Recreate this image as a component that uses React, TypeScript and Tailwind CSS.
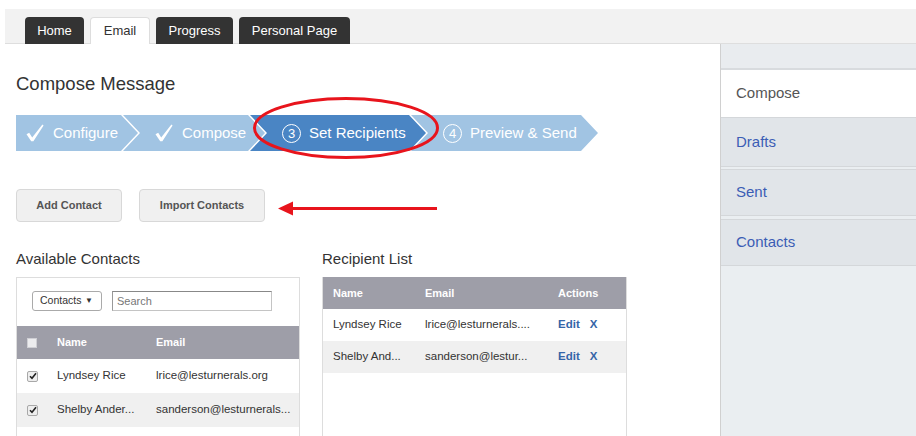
import type { ReactNode } from 'react';

type Contact = { id: number; name: string; email: string };

const available: Contact[] = [
  { id: 1, name: 'Lyndsey Rice', email: 'lrice@lesturnerals.org' },
  { id: 2, name: 'Shelby Ander...', email: 'sanderson@lesturnerals...' },
];

const recipients: Contact[] = [
  { id: 1, name: 'Lyndsey Rice', email: 'lrice@lesturnerals....' },
  { id: 2, name: 'Shelby And...', email: 'sanderson@lestur...' },
];

const CheckMark = () => (
  <svg width="18" height="18" viewBox="0 0 18 18" className="shrink-0">
    <path d="M0.5 10.2 L3.2 8.8 L6.2 13.4 L16.4 0.6 L17.6 1.4 L7.4 17.2 L5.2 17.2 Z" fill="#fff" />
  </svg>
);

const StepNumber = ({ n }: { n: number }) => (
  <span className="flex h-[19px] w-[19px] shrink-0 items-center justify-center rounded-full border-[1.5px] border-white text-[13px] leading-none">
    {n}
  </span>
);

const Box = ({ checked }: { checked?: boolean }) => (
  <span className="flex h-[11px] w-[11px] items-center justify-center rounded-[2px] border border-[#a8a8a8] bg-[#eeeeee]">
    {checked && (
      <svg width="8" height="8" viewBox="0 0 8 8">
        <path d="M1 4.2 L3 6.3 L7 1.3" fill="none" stroke="#222" strokeWidth="1.6" />
      </svg>
    )}
  </span>
);

const Tab = ({ label, active, width }: { label: string; active?: boolean; width: string }) => (
  <div
    className={
      active
        ? `-mb-px flex h-[27px] items-center justify-center rounded-t-[4px] border border-b-0 border-[#dddddd] bg-white text-[13px] text-[#333] ${width}`
        : `-mb-px flex h-[27px] items-center justify-center rounded-t-[4px] bg-[#333333] text-[13px] text-white ${width}`
    }
  >
    {label}
  </div>
);

const SideItem = ({ children, className }: { children: ReactNode; className: string }) => (
  <div className={`flex items-center border-y border-[#d4d7da] bg-[#e1e5e9] pl-[15px] text-[15px] text-[#3b5db5] ${className}`}>
    {children}
  </div>
);

export default function App() {
  return (
    <div className="relative h-[436px] w-[916px] overflow-hidden bg-white font-['Liberation_Sans',Arial,sans-serif]">
      {/* top navigation */}
      <div className="pt-[9px]">
        <div className="ml-[5px] flex h-[35px] items-end gap-[6px] border-b border-[#dedede] bg-[#f2f2f2] pl-[20px]">
          <Tab label="Home" width="w-[59px]" />
          <Tab label="Email" width="w-[60px]" active />
          <Tab label="Progress" width="w-[77px]" />
          <Tab label="Personal Page" width="w-[111px]" />
        </div>
      </div>

      <div className="flex">
        <main className="w-[720px] pl-[16px]">
          <h1 className="mt-[29px] text-[18.5px] leading-[22px] text-[#333]">Compose Message</h1>

          {/* wizard steps */}
          <div className="mt-[20px] flex h-[36px] text-[15px] text-white">
            <div className="flex w-[122px] items-center gap-[9px] bg-[#a1c4e3] pl-[10px] [clip-path:polygon(0_0,calc(100%_-_17px)_0,100%_50%,calc(100%_-_17px)_100%,0_100%)]">
              <CheckMark />
              <span>Configure</span>
            </div>
            <div className="-ml-[15px] flex w-[142px] items-center gap-[9px] bg-[#a1c4e3] pl-[32px] [clip-path:polygon(0_0,calc(100%_-_17px)_0,100%_50%,calc(100%_-_17px)_100%,0_100%,17px_50%)]">
              <CheckMark />
              <span>Compose</span>
            </div>
            <div className="-ml-[15px] flex w-[176px] items-center gap-[8px] bg-[#4a85c4] pl-[32px] [clip-path:polygon(0_0,calc(100%_-_17px)_0,100%_50%,calc(100%_-_17px)_100%,0_100%,17px_50%)]">
              <StepNumber n={3} />
              <span>Set Recipients</span>
            </div>
            <div className="-ml-[15px] flex w-[187px] items-center gap-[8px] bg-[#a1c4e3] pl-[32px] [clip-path:polygon(0_0,calc(100%_-_17px)_0,100%_50%,calc(100%_-_17px)_100%,0_100%,17px_50%)]">
              <StepNumber n={4} />
              <span>Preview &amp; Send</span>
            </div>
          </div>

          <div className="mt-[38px] flex gap-[17px]">
            <button className="h-[33px] w-[106px] rounded-[4px] border border-[#d8d8d8] bg-[#f0f0f0] text-[11px] font-bold text-[#555]">
              Add Contact
            </button>
            <button className="h-[33px] w-[126px] rounded-[4px] border border-[#d8d8d8] bg-[#f0f0f0] text-[11px] font-bold text-[#555]">
              Import Contacts
            </button>
          </div>

          <div className="mt-[28px] flex gap-[22px]">
            <section className="w-[284px]">
              <h2 className="text-[15px] leading-[18px] text-[#333]">Available Contacts</h2>
              <div className="mt-[9px] h-[200px] border border-[#dddddd]">
                <div className="flex items-center pl-[15px] pt-[13px]">
                  <div className="flex h-[20px] w-[70px] items-center rounded-[3px] border border-[#aaaaaa] pl-[7px] text-[10.5px] text-[#333]">
                    Contacts
                    <span className="ml-auto mr-[8px] text-[8px] leading-none">▼</span>
                  </div>
                  <input
                    className="ml-[10px] h-[20px] w-[160px] border border-[#c4c4c4] border-l-[#999] border-t-[#888] pl-[4px] text-[11px] text-[#333] outline-none placeholder:text-[#777]"
                    placeholder="Search"
                  />
                </div>
                <div className="mt-[15px] flex h-[33px] items-center bg-[#9e9ea8] text-[11px] font-bold text-white">
                  <div className="w-[40px] pl-[10px]">
                    <span className="block h-[10px] w-[10px] border border-[#cfcfd4] bg-[#ececee]" />
                  </div>
                  <div className="w-[99px]">Name</div>
                  <div>Email</div>
                </div>
                {available.map((c, i) => (
                  <div
                    key={c.id}
                    className={`flex h-[34px] items-center text-[11.5px] text-[#333] ${i % 2 ? 'bg-[#f0f0f0]' : 'bg-white'}`}
                  >
                    <div className="w-[40px] pl-[10px]">
                      <Box checked />
                    </div>
                    <div className="w-[99px]">{c.name}</div>
                    <div>{c.email}</div>
                  </div>
                ))}
              </div>
            </section>

            <section className="w-[305px]">
              <h2 className="text-[15px] leading-[18px] text-[#333]">Recipient List</h2>
              <div className="mt-[9px] h-[200px] border-x border-[#dddddd]">
                <div className="flex h-[32px] items-center bg-[#9e9ea8] pl-[10px] text-[11px] font-bold text-white">
                  <div className="w-[92px]">Name</div>
                  <div className="w-[133px]">Email</div>
                  <div>Actions</div>
                </div>
                {recipients.map((c, i) => (
                  <div
                    key={c.id}
                    className={`flex h-[32px] items-center pl-[10px] text-[11.5px] text-[#333] ${i % 2 ? 'bg-[#f0f0f0]' : 'bg-white'}`}
                  >
                    <div className="w-[92px]">{c.name}</div>
                    <div className="w-[133px]">{c.email}</div>
                    <div className="flex gap-[10px] font-bold text-[#3565a8]">
                      <span>Edit</span>
                      <span>X</span>
                    </div>
                  </div>
                ))}
              </div>
            </section>
          </div>
        </main>

        <aside className="h-[392px] w-[196px] border-l border-[#d0d0d0] bg-[#eaeef1]">
          <div className="h-[26px] border-b-2 border-[#d8dbde] bg-[#e9ecef]" />
          <div className="flex h-[47px] items-center bg-white pl-[15px] text-[15px] text-[#555]">Compose</div>
          <SideItem className="h-[50px]">Drafts</SideItem>
          <SideItem className="mt-[2px] h-[47px]">Sent</SideItem>
          <SideItem className="mt-[3px] h-[47px]">Contacts</SideItem>
        </aside>
      </div>

      {/* red callouts */}
      <svg className="absolute left-[251px] top-[95px]" width="192" height="66" viewBox="0 0 192 66">
        <ellipse cx="95" cy="33" rx="91.5" ry="29.5" fill="none" stroke="#e8141c" strokeWidth="3" />
      </svg>
      <svg className="absolute left-[277px] top-[200px]" width="162" height="18" viewBox="0 0 162 18">
        <path d="M1 8.5 L16 1.5 L16 15.5 Z" fill="#e8141c" />
        <rect x="14" y="7" width="146" height="3" fill="#e8141c" />
      </svg>
    </div>
  );
}
